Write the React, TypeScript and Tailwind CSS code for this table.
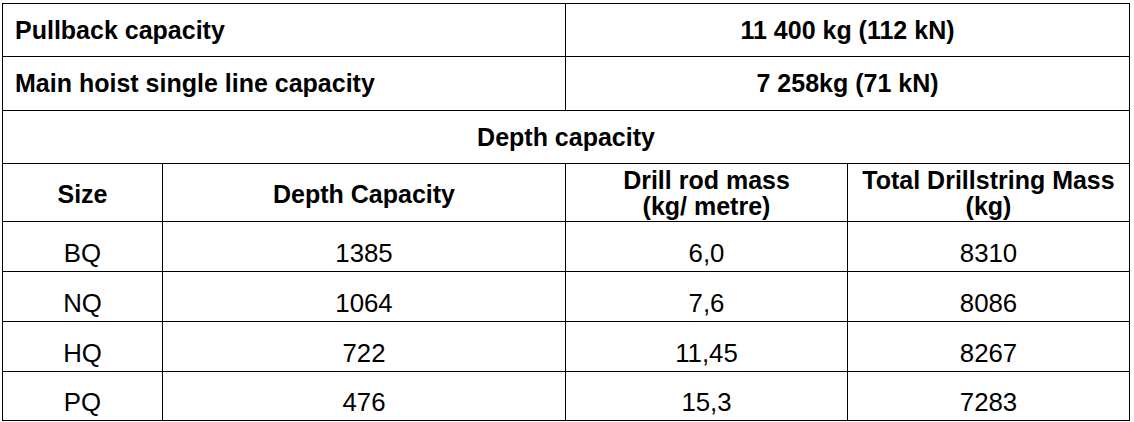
import React from "react";

const rows = [
  ["BQ", "1385", "6,0", "8310"],
  ["NQ", "1064", "7,6", "8086"],
  ["HQ", "722", "11,45", "8267"],
  ["PQ", "476", "15,3", "7283"],
];

export default function App() {
  const cell = "border-r border-b border-black flex";
  return (
    <div className="w-[1134px] h-[422px] bg-white pl-[2px] pt-[3px] font-['Liberation_Sans',Arial,sans-serif] text-black text-[25px] leading-[25px]">
      <div className="grid grid-cols-[160px_403px_282px_282px] w-[1128px] border-l border-t border-black">
        <div className={`${cell} col-span-2 h-[53px] items-center pl-[12px] font-bold`}>Pullback capacity</div>
        <div className={`${cell} col-span-2 h-[53px] items-center justify-center font-bold`}>11 400 kg (112 kN)</div>
        <div className={`${cell} col-span-2 h-[54px] items-center pl-[12px] font-bold`}>Main hoist single line capacity</div>
        <div className={`${cell} col-span-2 h-[54px] items-center justify-center font-bold`}>7 258kg (71 kN)</div>
        <div className={`${cell} col-span-4 h-[53px] items-center justify-center font-bold`}>Depth capacity</div>
        <div className={`${cell} h-[58px] items-center justify-center font-bold pt-[3px]`}>Size</div>
        <div className={`${cell} h-[58px] items-center justify-center font-bold pt-[3px]`}>Depth Capacity</div>
        <div className={`${cell} h-[58px] items-center justify-center font-bold text-center leading-[26px] pt-[1px]`}>
          <span>Drill rod mass<br />(kg/ metre)</span>
        </div>
        <div className={`${cell} h-[58px] items-center justify-center font-bold text-center leading-[26px] pt-[1px]`}>
          <span>Total Drillstring Mass<br />(kg)</span>
        </div>
        {rows.map((r, i) =>
          r.map((v, j) => (
            <div
              key={`${i}-${j}`}
              className={`${cell} ${i === 3 ? "h-[49px]" : "h-[50px]"} items-end justify-center pb-[5px] text-[25.8px]`}
            >
              {v}
            </div>
          ))
        )}
      </div>
    </div>
  );
}
